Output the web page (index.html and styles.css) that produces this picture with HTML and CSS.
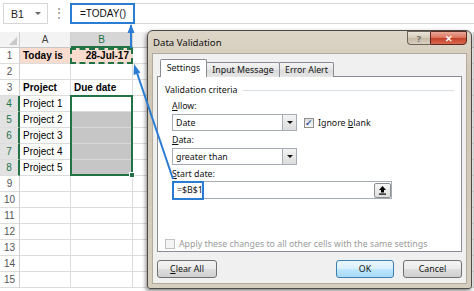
FILE: index.html
```html
<!DOCTYPE html>
<html>
<head>
<meta charset="utf-8">
<link rel="stylesheet" href="styles.css">
</head>
<body>
<div class="app">
  <div class="fbar">
    <div class="namebox"><span>B1</span><span class="nb-arrow"></span></div>
    <div class="fdots">⋮</div>
    <div class="finput"><div class="ftext">=TODAY()</div></div>
  </div>

  <div class="sheet">
    <div class="c ch corner"><span class="tri"></span></div>
    <div class="c ch">A</div>
    <div class="c ch csel">B</div>
    <div class="c ch">C</div>

    <div class="c rh">1</div>
    <div class="c b salmon">Today is</div>
    <div class="c b salmon r marq-host">28-Jul-17<span class="marquee"></span></div>
    <div class="c"></div>

    <div class="c rh">2</div><div class="c"></div><div class="c"></div><div class="c"></div>

    <div class="c rh">3</div>
    <div class="c b">Project</div>
    <div class="c b">Due date</div>
    <div class="c"></div>

    <div class="c rh rsel">4</div>
    <div class="c">Project 1</div>
    <div class="c sel-host"><span class="selection"><span class="handle"></span></span></div>
    <div class="c"></div>

    <div class="c rh rsel">5</div>
    <div class="c">Project 2</div>
    <div class="c fill"></div>
    <div class="c"></div>

    <div class="c rh rsel">6</div>
    <div class="c">Project 3</div>
    <div class="c fill"></div>
    <div class="c"></div>

    <div class="c rh rsel">7</div>
    <div class="c">Project 4</div>
    <div class="c fill"></div>
    <div class="c"></div>

    <div class="c rh rsel">8</div>
    <div class="c">Project 5</div>
    <div class="c fill"></div>
    <div class="c"></div>

    <div class="c rh">9</div><div class="c"></div><div class="c"></div><div class="c"></div>
    <div class="c rh">10</div><div class="c"></div><div class="c"></div><div class="c"></div>
    <div class="c rh">11</div><div class="c"></div><div class="c"></div><div class="c"></div>
    <div class="c rh">12</div><div class="c"></div><div class="c"></div><div class="c"></div>
    <div class="c rh">13</div><div class="c"></div><div class="c"></div><div class="c"></div>
    <div class="c rh">14</div><div class="c"></div><div class="c"></div><div class="c"></div>
    <div class="c rh">15</div><div class="c"></div><div class="c"></div><div class="c"></div>
  </div>

  <div class="dialog">
    <div class="titlebar">
      <span class="title">Data Validation</span>
      <div class="capbtns">
        <span class="cap help">?</span>
        <span class="cap close">✕</span>
      </div>
    </div>
    <div class="client">
      <div class="tabs">
        <span class="tab active t1">Settings</span>
        <span class="tab t2">Input Message</span>
        <span class="tab t3">Error Alert</span>
      </div>
      <div class="panel">
        <div class="group"><span>Validation criteria</span><span class="rule"></span></div>
        <div class="fields">
          <div class="lbl l-allow"><u>A</u>llow:</div>
          <div class="line">
            <div class="select"><span class="val">Date</span><span class="dd"><span class="dtri"></span></span></div>
            <div class="chk"><span class="box on">✓</span><span>Ignore <u>b</u>lank</span></div>
          </div>
          <div class="lbl"><u>D</u>ata:</div>
          <div class="select"><span class="val">greater than</span><span class="dd"><span class="dtri"></span></span></div>
          <div class="lbl"><u>S</u>tart date:</div>
          <div class="input">
            <span class="ref">=$B$1</span>
            <span class="collapse">
              <svg width="11" height="10" viewBox="0 0 11 10"><path d="M5.5 1 L9 5 L7 5 L7 7.5 L4 7.5 L4 5 L2 5 Z" fill="#000"/><rect x="2" y="8.5" width="7" height="1.2" fill="#000"/></svg>
            </span>
          </div>
        </div>
        <div class="apply"><span class="box off"></span><span>Apply these changes to all other cells with the same settings</span></div>
      </div>
      <div class="buttons">
        <span class="btn clear"><u>C</u>lear All</span>
        <span class="spacer"></span>
        <span class="btn ok">OK</span>
        <span class="btn cancel">Cancel</span>
      </div>
    </div>
  </div>

  <svg class="arrows" width="474" height="291" viewBox="0 0 474 291">
    <line x1="131" y1="25" x2="131" y2="48" stroke="#2b7cd3" stroke-width="2"/>
    <polygon points="131,24 127.5,33 134.5,33" fill="#2b7cd3"/>
    <line x1="173" y1="179" x2="136" y2="70" stroke="#2b7cd3" stroke-width="2"/>
    <polygon points="134,64 140.4,72.6 133.6,74.9" fill="#2b7cd3"/>
  </svg>
</div>
</body>
</html>
```

FILE: styles.css
```css
* { box-sizing: border-box; margin: 0; padding: 0; }
html, body { width: 474px; height: 291px; overflow: hidden; background: #fff; }
body { font-family: "Liberation Sans", Arial, sans-serif; color: #000; }
.app { position: relative; width: 474px; height: 291px; overflow: hidden; background: #fff; }

/* formula bar */
.fbar { display: flex; height: 32px; padding: 3px 0 8px 3px; }
.namebox { width: 45px; border: 1px solid #d6d6d6; display: flex; align-items: center; justify-content: space-between; padding: 0 6px 0 7px; font-size: 10.5px; color: #222; }
.nb-arrow { width: 0; height: 0; border-left: 3px solid transparent; border-right: 3px solid transparent; border-top: 3px solid #666; }
.fdots { width: 22px; text-align: center; color: #8a8a8a; font-size: 12px; line-height: 21px; }
.finput { flex: 1; border-top: 1px solid #d6d6d6; border-bottom: 1px solid #d6d6d6; }
.ftext { width: 65px; height: 21px; margin: -1px 0 0 0; border: 2px solid #2b7cd3; font-size: 10px; line-height: 17px; padding-left: 8px; color: #111; }

/* sheet */
.sheet { display: grid; grid-template-columns: 20px 51px 62px 1fr; grid-auto-rows: 16px; font-size: 10px; }
.c { border-right: 1px solid #dcdcdc; border-bottom: 1px solid #dcdcdc; padding: 0 3px; line-height: 15px; white-space: nowrap; overflow: visible; position: relative; }
.ch { background: #f3f3f3; border-right-color: #d0d0d0; border-bottom-color: #c6c6c6; text-align: center; color: #444; }
.csel { background: #d6d6d6; color: #217346; border-bottom: 2px solid #217346; }
.corner { position: relative; }
.tri { position: absolute; right: 2px; bottom: 2px; width: 0; height: 0; border-left: 8px solid transparent; border-bottom: 8px solid #c8c8c8; }
.rh { text-align: center; color: #555; padding: 0; border-right-color: #cfcfcf; }
.rsel { background: #e2e2e2; color: #217346; border-right: 2px solid #217346; }
.b { font-weight: bold; }
.r { text-align: right; }
.salmon { background: #f9dccd; }
.fill { background: #c6c6c6; border-bottom-color: #d8d8d8; }
.marquee { position: absolute; left: -1px; top: 0; right: -1px; bottom: -1px; border: 2px dashed #217346; z-index: 2; }
.selection { position: absolute; left: -1px; top: -1px; width: 63px; height: 81px; border: 2px solid #217346; z-index: 2; }
.handle { position: absolute; right: -4px; bottom: -4px; width: 6px; height: 6px; background: #217346; border: 1px solid #fff; }

/* dialog */
.dialog { position: absolute; left: 147px; top: 30px; width: 325px; height: 259px; z-index: 5; border: 1px solid #4e4b46; border-radius: 6px 6px 3px 3px; background: linear-gradient(#ddd5c7, #cfc6b4 20%, #d6cebe 100%); padding: 0 4px 4px; box-shadow: -1px 2px 4px rgba(0,0,0,.5); font-family: "Noto Sans", "Open Sans", sans-serif; font-size: 8.8px; color: #111; }
.titlebar { height: 22px; display: flex; justify-content: space-between; align-items: flex-start; }
.title { padding: 5px 0 0 1px; font-size: 9.6px; color: #111; }
.capbtns { display: flex; height: 14px; }
.cap { display: flex; align-items: center; justify-content: center; height: 14px; border: 1px solid #6c6458; font-weight: bold; }
.help { width: 23px; border-radius: 0 0 0 4px; background: linear-gradient(#ece6da, #d3c9b6 50%, #c5baa4 50%, #d8cfbf); color: #6c6a66; font-size: 9px; border-right: none; }
.close { width: 37px; border-radius: 0 0 4px 0; background: linear-gradient(#eaa898, #d9735c 48%, #c4412a 52%, #d7684d); color: #fff; font-size: 9px; border-color: #5e2a20; }

.client { height: 231px; background: #f0f0f0; border: 1px solid #b2aa9a; padding: 6px 4px 0; }
.tabs { display: flex; align-items: flex-end; height: 17px; padding-left: 3px; margin-bottom: -1px; position: relative; z-index: 1; }
.tab { height: 15px; border: 1px solid #898c95; border-bottom: none; background: linear-gradient(#f5f5f5, #e4e4e4 50%, #dadada 50%, #e6e6e6); line-height: 14px; text-align: center; margin-right: -1px; border-radius: 2px 2px 0 0; }
.tab.active { height: 18px; background: #fff; line-height: 16px; }
.t1 { width: 47px; }
.t2 { width: 74px; }
.t3 { width: 55px; }
.panel { height: 176px; background: #fff; border: 1px solid #898c95; padding: 6px 7px 0; }
.group { display: flex; align-items: center; height: 14px; }
.rule { flex: 1; height: 1px; background: #d5dfe5; margin: 0 0 0 5px; max-width: 214px; }
.fields { padding-left: 7px; }
.lbl { height: 14px; line-height: 14px; margin-top: 2px; }
.line { display: flex; align-items: center; margin-top: 1px; }
.select { width: 125px; height: 17px; border: 1px solid #a5acb5; display: flex; align-items: center; justify-content: space-between; background: #fff; margin-top: 1px; }
.line .select { margin-top: 0; }
.val { padding-left: 3px; }
.dd { width: 14px; height: 15px; border-left: 1px solid #a5acb5; background: linear-gradient(#f3f3f3, #dcdcdc); display: flex; align-items: center; justify-content: center; }
.dtri { width: 0; height: 0; border-left: 3px solid transparent; border-right: 3px solid transparent; border-top: 3px solid #111; }
.chk { display: flex; align-items: center; margin-left: 7px; }
.box { width: 10px; height: 10px; border: 1px solid #8f8f8f; background: linear-gradient(#dcdcdc, #fafafa); margin-right: 4px; display: flex; align-items: center; justify-content: center; color: #3b5fa6; font-size: 9px; font-weight: bold; line-height: 1; }
.box.off { border-color: #c2c2c2; background: #f4f4f4; }
.input { width: 220px; height: 18px; border: 1px solid #a5acb5; display: flex; align-items: center; justify-content: space-between; }
.ref { height: 19px; margin: 0 0 0 -1px; border: 2px solid #2b7cd3; padding: 0 3px; line-height: 15px; width: 32px; }
.collapse { width: 17px; height: 15px; border: 1px solid #8e8e8e; border-radius: 2px; background: linear-gradient(#f6f6f6, #dedede); display: flex; align-items: center; justify-content: center; }
.apply { display: flex; align-items: center; margin-top: 38px; color: #9a9a9a; height: 14px; }
.buttons { display: flex; margin-top: 8px; gap: 9px; }
.spacer { flex: 1; }
.btn { height: 18px; border: 1px solid #707070; border-radius: 3px; background: linear-gradient(#f3f3f3, #ebebeb 48%, #dddddd 52%, #d0d0d0); display: flex; align-items: center; justify-content: center; color: #111; }
.clear { width: 60px; }
.ok { width: 58px; border-color: #3c7fb1; background: linear-gradient(#eaf6fd, #d9f0fc 48%, #bee6fd 52%, #a7d9f5); }
.cancel { width: 59px; }

.arrows { position: absolute; left: 0; top: 0; pointer-events: none; z-index: 10; }
```
